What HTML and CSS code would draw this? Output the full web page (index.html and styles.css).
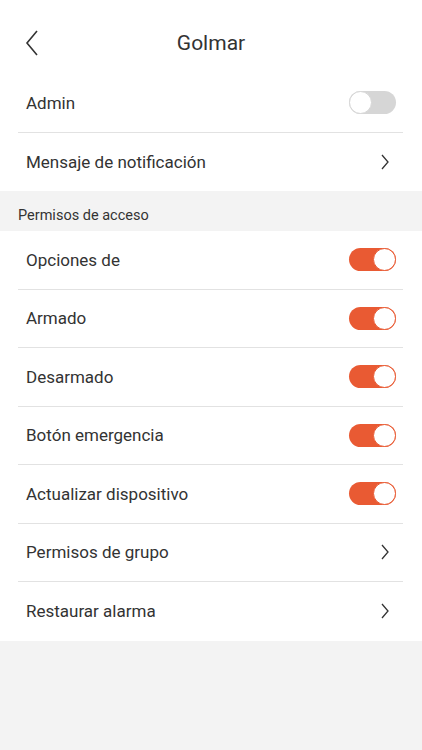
FILE: index.html
```html
<!DOCTYPE html>
<html lang="es">
<head>
  <meta charset="UTF-8">
  <title>Golmar</title>
  <link rel="stylesheet" href="styles.css">
</head>
<body>
  <header class="topbar">
    <svg class="back" width="14" height="26" viewBox="0 0 14 26">
      <path d="M12 1 L2 13 L12 25" fill="none" stroke="#333" stroke-width="1.6"/>
    </svg>
    <h1>Golmar</h1>
  </header>

  <div class="group">
    <div class="row">
      <span>Admin</span>
      <span class="switch"></span>
    </div>
    <div class="row">
      <span>Mensaje de notificación</span>
      <svg class="chev" width="10" height="16" viewBox="0 0 10 16"><path d="M2 1 L8 8 L2 15" fill="none" stroke="#333" stroke-width="1.3"/></svg>
    </div>
  </div>

  <div class="caption">Permisos de acceso</div>

  <div class="group">
    <div class="row">
      <span>Opciones de</span>
      <span class="switch on"></span>
    </div>
    <div class="row">
      <span>Armado</span>
      <span class="switch on"></span>
    </div>
    <div class="row">
      <span>Desarmado</span>
      <span class="switch on"></span>
    </div>
    <div class="row">
      <span>Botón emergencia</span>
      <span class="switch on"></span>
    </div>
    <div class="row">
      <span>Actualizar dispositivo</span>
      <span class="switch on"></span>
    </div>
    <div class="row">
      <span>Permisos de grupo</span>
      <svg class="chev" width="10" height="16" viewBox="0 0 10 16"><path d="M2 1 L8 8 L2 15" fill="none" stroke="#333" stroke-width="1.3"/></svg>
    </div>
    <div class="row">
      <span>Restaurar alarma</span>
      <svg class="chev" width="10" height="16" viewBox="0 0 10 16"><path d="M2 1 L8 8 L2 15" fill="none" stroke="#333" stroke-width="1.3"/></svg>
    </div>
  </div>
</body>
</html>
```

FILE: styles.css
```css
html, body {
  margin: 0;
  padding: 0;
}

body {
  font-family: Roboto, 'Liberation Sans', sans-serif;
  background-color: #f3f3f3;
  color: #333;
  min-height: 750px;
}

.topbar {
  background: #fff;
  height: 74px;
  display: flex;
  align-items: center;
  justify-content: center;
  position: relative;
}

.topbar h1 {
  margin: 12px 0 0;
  font-size: 21px;
  font-weight: 400;
  color: #333;
}

.back {
  position: absolute;
  left: 25px;
  top: 30px;
}

.group {
  background: #fff;
  padding: 0 19px 0 18px;
}

.row {
  height: 58.5px;
  box-sizing: border-box;
  display: flex;
  align-items: center;
  justify-content: space-between;
  padding: 0 7px 0 8px;
  font-size: 17px;
  border-bottom: 1px solid #e2e2e2;
}

.row:last-child {
  border-bottom: none;
}

.caption {
  height: 40px;
  box-sizing: border-box;
  padding: 16px 0 0 18px;
  font-size: 14.5px;
  color: #333;
}

.switch {
  width: 47px;
  height: 23px;
  border-radius: 12px;
  background: #d6d6d6;
  position: relative;
  box-sizing: border-box;
}

.switch::after {
  content: "";
  position: absolute;
  left: 0;
  top: 0;
  width: 23px;
  height: 23px;
  border-radius: 50%;
  background: #fff;
  border: 1px solid #d6d6d6;
  box-sizing: border-box;
}

.switch.on {
  background: #e95a33;
}

.switch.on::after {
  left: 24px;
  border-color: #e95a33;
}

.chev {
  margin-right: 6px;
}
```
